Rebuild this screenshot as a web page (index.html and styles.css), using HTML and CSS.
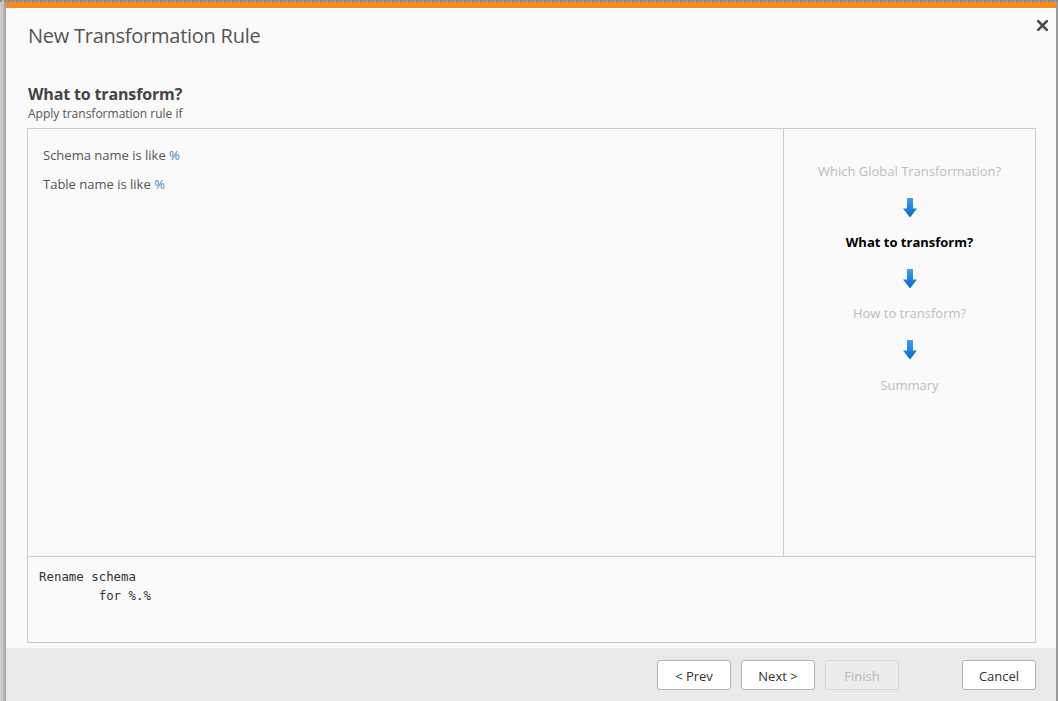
FILE: index.html
```html
<!DOCTYPE html>
<html>
<head>
<meta charset="utf-8">
<link rel="stylesheet" href="styles.css">
</head>
<body>
<div class="dialog">
  <button class="close" aria-label="Close">
    <svg width="11" height="11" viewBox="0 0 11 11"><path d="M1.2 1.2 L9.8 9.8 M9.8 1.2 L1.2 9.8" stroke="#4a4a4a" stroke-width="2.6" stroke-linecap="square"/></svg>
  </button>
  <div class="header">
    <h1 class="title">New Transformation Rule</h1>
    <h2 class="heading">What to transform?</h2>
    <p class="subtitle">Apply transformation rule if</p>
  </div>
  <div class="box">
    <div class="upper">
      <div class="conditions">
        <div class="cond">Schema name is like <span class="val">%</span></div>
        <div class="cond">Table name is like <span class="val">%</span></div>
      </div>
      <div class="steps">
        <div class="step">Which Global Transformation?</div>
        <div class="arrow"><svg width="14" height="20" viewBox="0 0 14 20"><defs><linearGradient id="g1" x1="0" y1="0" x2="0" y2="1"><stop offset="0" stop-color="#3aa2f2"/><stop offset="1" stop-color="#0866c9"/></linearGradient></defs><path d="M4 0 H10 V10.5 H14 L7 19.5 L0 10.5 H4 Z" fill="url(#g1)"/></svg></div>
        <div class="step active">What to transform?</div>
        <div class="arrow"><svg width="14" height="20" viewBox="0 0 14 20"><path d="M4 0 H10 V10.5 H14 L7 19.5 L0 10.5 H4 Z" fill="url(#g1)"/></svg></div>
        <div class="step">How to transform?</div>
        <div class="arrow"><svg width="14" height="20" viewBox="0 0 14 20"><path d="M4 0 H10 V10.5 H14 L7 19.5 L0 10.5 H4 Z" fill="url(#g1)"/></svg></div>
        <div class="step">Summary</div>
      </div>
    </div>
    <pre class="preview">Rename schema
        for %.%</pre>
  </div>
  <div class="footer">
    <button class="btn">&lt; Prev</button>
    <button class="btn">Next &gt;</button>
    <button class="btn" disabled>Finish</button>
    <span class="spacer"></span>
    <button class="btn">Cancel</button>
  </div>
</div>
</body>
</html>
```

FILE: styles.css
```css
html, body {
  margin: 0;
  padding: 0;
  height: 100%;
  overflow: hidden;
}
body {
  background: linear-gradient(to right, #cfcfcf 0, #c4c4c4 3px, #9a9a9a 6px);
  border-top: 2px dotted #8a8a8a;
  box-sizing: border-box;
  font-family: "Open Sans", "Noto Sans", sans-serif;
  color: #555;
}
.dialog {
  position: relative;
  margin-left: 6px;
  width: 1050px;
  height: 699px;
  background: #fafafa;
  border-top: 6px solid #f68a1f;
  box-sizing: border-box;
  display: flex;
  flex-direction: column;
  box-shadow: 2px 0 0 #9a9a9a;
}
.close {
  position: absolute;
  top: 12px;
  right: 8px;
  border: 0;
  background: none;
  padding: 0;
  width: 11px;
  height: 11px;
  display: flex;
}
.header {
  padding: 14px 22px 0;
}
.title {
  margin: 0;
  font-weight: 400;
  font-size: 20px;
  line-height: 28px;
  color: #555;
  letter-spacing: -0.25px;
}
.heading {
  margin: 33px 0 0;
  font-size: 16px;
  line-height: 22px;
  font-weight: 700;
  color: #444;
  letter-spacing: -0.15px;
}
.subtitle {
  margin: 1px 0 6px;
  font-size: 12px;
  line-height: 16px;
  color: #555;
}
.box {
  margin: 0 20px 0 21px;
  height: 515px;
  border: 1px solid #cbcbcb;
  box-sizing: border-box;
  display: flex;
  flex-direction: column;
}
.upper {
  display: flex;
  flex: 1;
  border-bottom: 1px solid #cbcbcb;
}
.conditions {
  flex: 1;
  padding: 16px 15px;
  display: flex;
  flex-direction: column;
  gap: 9px;
}
.cond {
  font-size: 13px;
  line-height: 20px;
  color: #555;
}
.val {
  color: #3c86c8;
}
.steps {
  width: 251px;
  border-left: 1px solid #cbcbcb;
  display: flex;
  flex-direction: column;
  align-items: center;
  padding-top: 32px;
  gap: 15.6px;
}
.step {
  font-size: 13px;
  line-height: 20px;
  color: #bdbdbd;
}
.step.active {
  color: #000;
  font-weight: 700;
}
.arrow {
  height: 20px;
  display: flex;
  padding-top: 1px;
  box-sizing: border-box;
}
.preview {
  height: 85px;
  margin: 0;
  padding: 10px 11px;
  box-sizing: border-box;
  font-family: "DejaVu Sans Mono", "Liberation Mono", monospace;
  font-size: 12.4px;
  line-height: 19px;
  color: #333;
}
.footer {
  margin-top: 5px;
  flex: 1;
  background: #e9e9e9;
  display: flex;
  align-items: flex-start;
  padding: 12px 20px 0 651px;
  gap: 10px;
}
.spacer {
  flex: 1;
}
.btn {
  width: 74px;
  height: 30px;
  background: #fff;
  border: 1px solid #b4b4b4;
  border-radius: 3px;
  font-family: "Open Sans", "Noto Sans", sans-serif;
  font-size: 13px;
  line-height: 30px;
  color: #333;
  padding: 0;
}
.btn:disabled {
  background: #ececec;
  border-color: #d6d6d6;
  color: #bbb;
}
```
